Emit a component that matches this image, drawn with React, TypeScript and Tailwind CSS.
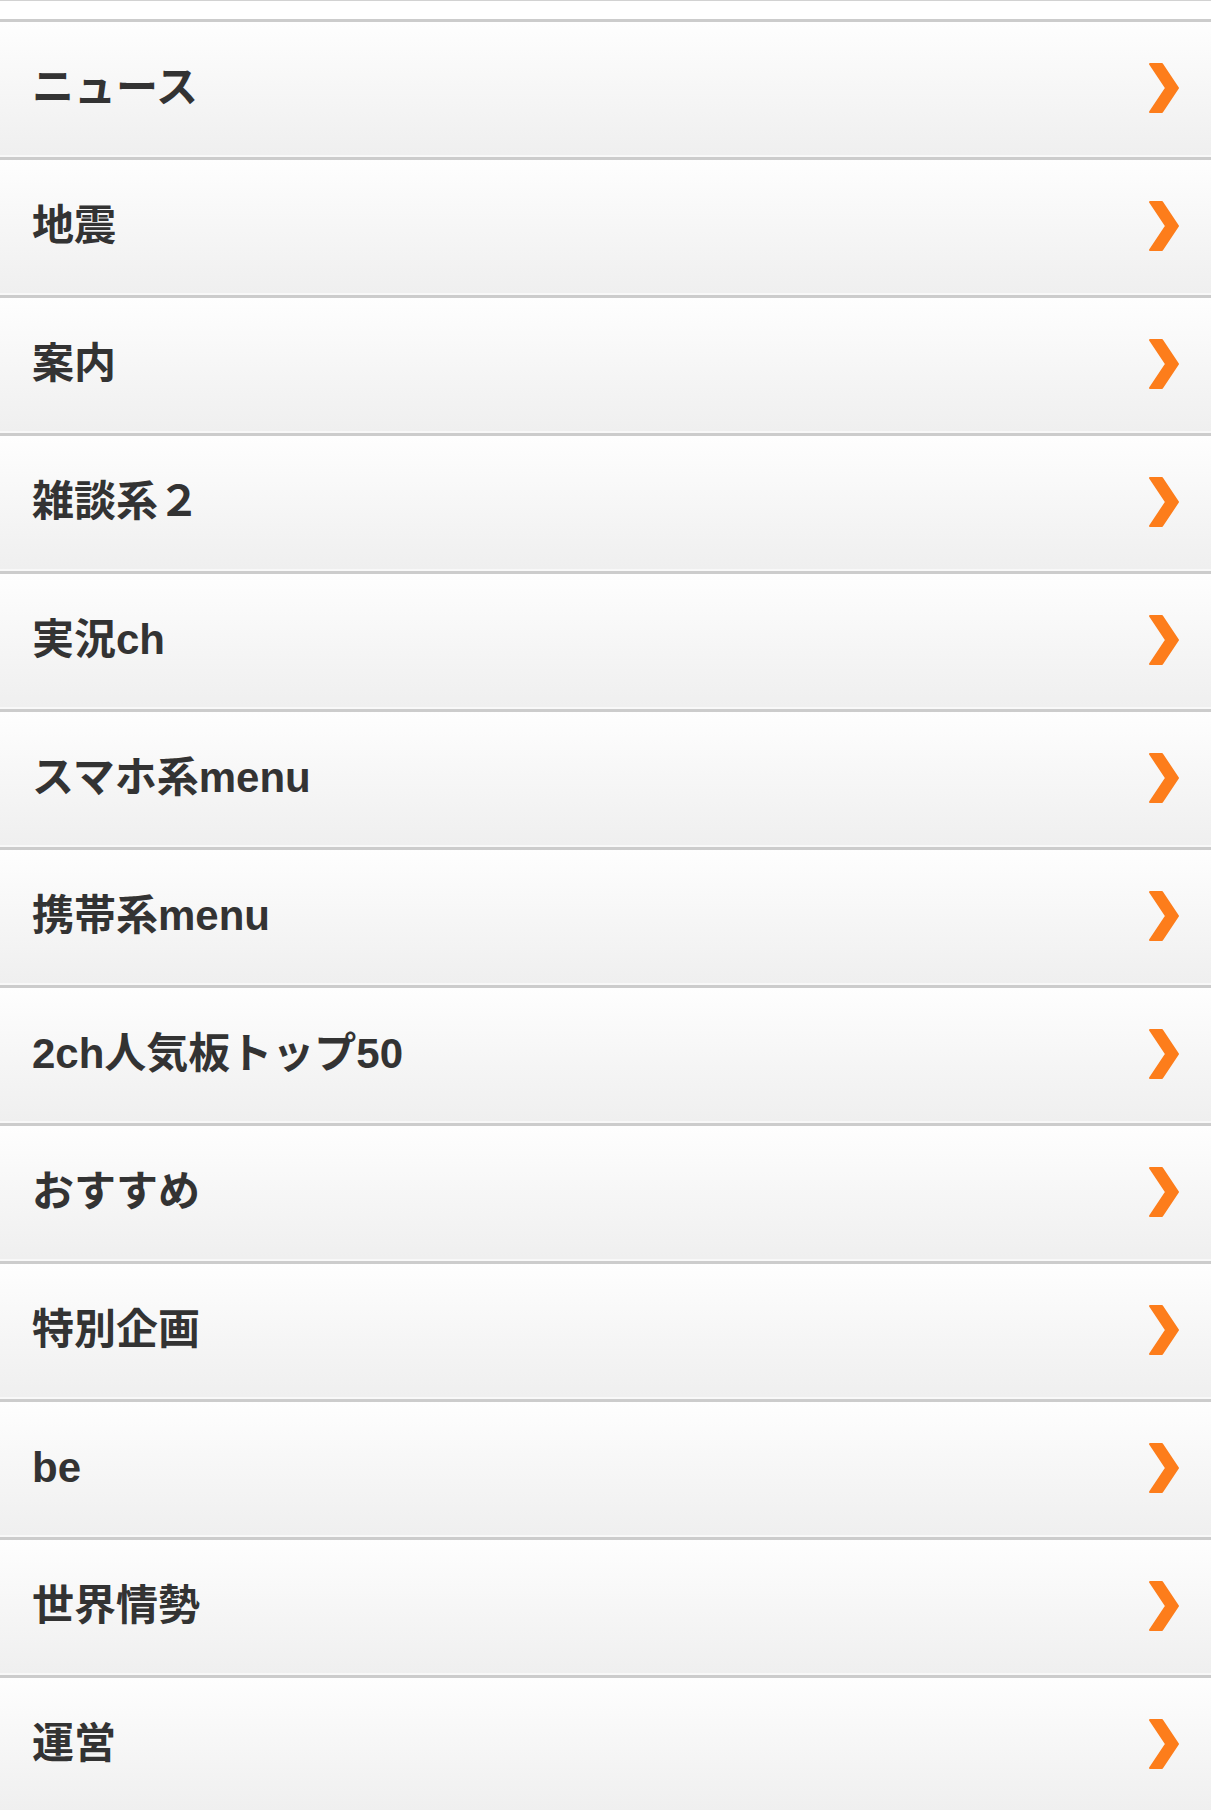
import React from "react";

const items = [
  "ニュース",
  "地震",
  "案内",
  "雑談系２",
  "実況ch",
  "スマホ系menu",
  "携帯系menu",
  "2ch人気板トップ50",
  "おすすめ",
  "特別企画",
  "be",
  "世界情勢",
  "運営",
];

function Chevron() {
  return (
    <svg width="34" height="52" viewBox="0 0 34 52" className="mb-[1px] shrink-0">
      <path
        d="M3 2 H15 L31 26 L15 50 H3 L19 26 Z"
        fill="#fd7d1b"
        stroke="#fd7d1b"
        strokeWidth="2"
        strokeLinejoin="round"
      />
    </svg>
  );
}

export default function App() {
  return (
    <div
      className="w-full bg-white"
      style={{ fontFamily: '"Liberation Sans", "Noto Sans CJK JP", sans-serif' }}
    >
      <div className="h-[19px] border-t border-[#d2d2d2] bg-white" />
      {items.map((t) => (
        <div
          key={t}
          className="box-border flex h-[138px] items-center justify-between border-t-[3px] border-b-[2px] border-t-[#cccccc] border-b-[#f8f8f8] bg-gradient-to-b from-[#fefefe] to-[#efefef] pl-[32px] pr-[30px]"
        >
          <span className="mb-[2px] text-[42px] font-bold leading-none text-[#333333]">{t}</span>
          <Chevron />
        </div>
      ))}
    </div>
  );
}
